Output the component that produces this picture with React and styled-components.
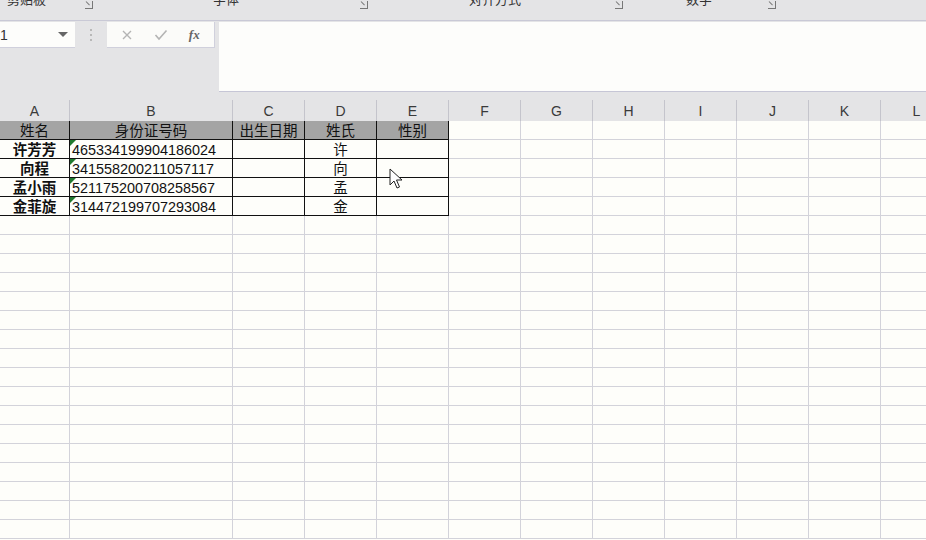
import React from 'react';
import styled, { createGlobalStyle } from 'styled-components';

const GlobalStyle = createGlobalStyle`
  html, body { margin: 0; padding: 0; }
  body {
    width: 926px;
    height: 540px;
    overflow: hidden;
    background: #fefefa;
    font-family: "Liberation Sans", "Noto Sans CJK SC", sans-serif;
  }
`;

const Window = styled.div`
  width: 926px;
  height: 540px;
  overflow: hidden;
  display: flex;
  flex-direction: column;
  position: relative;
`;

const Ribbon = styled.div`
  height: 21px;
  background: #e4e4e6;
  border-bottom: 1px solid #c9c9d6;
  box-sizing: border-box;
  display: flex;
  align-items: flex-start;
  overflow: hidden;
`;

const Group = styled.div`
  width: ${p => p.$w}px;
  height: 10px;
  display: flex;
  justify-content: space-between;
  align-items: flex-end;
  overflow: hidden;
  position: relative;
`;

const GroupLabel = styled.span`
  font-family: "Noto Sans CJK SC", sans-serif;
  font-size: 13px;
  line-height: 13px;
  color: #333;
  margin-left: ${p => p.$ml}px;
  transform: translateY(-5px);
  white-space: nowrap;
`;

const Launcher = styled.span`
  width: 7px;
  height: 7px;
  border-right: 1px solid #777;
  border-bottom: 1px solid #777;
  margin-right: ${p => p.$mr}px;
  margin-bottom: 1px;
  position: relative;
  &::after {
    content: '';
    position: absolute;
    left: 1px;
    top: 0;
    width: 5px;
    height: 1px;
    background: #777;
    transform: rotate(45deg);
    transform-origin: left;
  }
`;

const FormulaBar = styled.div`
  height: 72px;
  background: #e4e4e6;
  display: flex;
  padding-top: 1px;
  box-sizing: border-box;
`;

const Controls = styled.div`
  display: flex;
  align-items: flex-start;
  width: 219px;
  height: 26px;
`;

const NameBox = styled.div`
  width: 75px;
  height: 26px;
  background: #fdfdfb;
  border-bottom: 1px solid #d0d0dc;
  box-sizing: border-box;
  display: flex;
  align-items: center;
  justify-content: space-between;
  padding-right: 7px;
  font-size: 14px;
  color: #333;
`;

const Caret = styled.span`
  width: 0;
  height: 0;
  border-left: 5px solid transparent;
  border-right: 5px solid transparent;
  border-top: 5px solid #666;
`;

const Grip = styled.div`
  width: 32px;
  height: 26px;
  display: flex;
  flex-direction: column;
  align-items: center;
  justify-content: center;
  gap: 3px;
  span {
    width: 2px;
    height: 2px;
    background: #b8b8b8;
  }
`;

const ButtonBox = styled.div`
  width: 108px;
  height: 26px;
  background: #fbfbf9;
  border-bottom: 1px solid #d0d0dc;
  border-right: 1px solid #d0d0dc;
  box-sizing: border-box;
  display: flex;
  align-items: center;
  justify-content: space-around;
  padding: 0 4px;
`;

const Fx = styled.span`
  font-family: "Liberation Serif", serif;
  font-style: italic;
  font-weight: bold;
  font-size: 13px;
  color: #666;
`;

const FormulaInput = styled.div`
  flex: 1;
  height: 70px;
  background: #fdfdfb;
  border-bottom: 1px solid #c6c6d6;
  box-sizing: border-box;
`;

const Sheet = styled.div`
  display: grid;
  grid-template-columns: 70px 163px repeat(10, 72px);
  grid-template-rows: 21px;
  grid-auto-rows: 19px;
  background: #e4e4e6;
  padding-top: 7px;
`;

const ColHead = styled.div`
  box-sizing: border-box;
  border-right: 1px solid #c4c4cc;
  display: flex;
  align-items: flex-end;
  justify-content: center;
  font-size: 14px;
  line-height: 19px;
  color: #3a3a3a;
  background: #e4e4e6;
`;

const Cell = styled.div`
  box-sizing: border-box;
  position: relative;
  background: ${p => (p.$head ? '#a4a4a4' : '#fefefa')};
  border-right: 1px solid ${p => (p.$framed ? '#111' : '#d3d3da')};
  border-bottom: 1px solid ${p => (p.$framed ? '#111' : '#d3d3da')};
  font-family: "Noto Sans CJK SC", "Liberation Sans", sans-serif;
  font-size: 14.5px;
  line-height: 18px;
  font-weight: ${p => (p.$bold ? 700 : 400)};
  color: #111;
  text-align: ${p => p.$align || 'center'};
  padding-left: ${p => (p.$align === 'left' ? '2px' : '0')};
  white-space: nowrap;
  overflow: hidden;
  ${p => p.$flag && `
    &::before {
      content: '';
      position: absolute;
      left: 0;
      top: 0;
      border-top: 6px solid #1f7a2f;
      border-right: 6px solid transparent;
    }
  `}
`;

const Digits = styled.span`
  font-family: "Liberation Sans", sans-serif;
  font-size: 14.4px;
`;

const Cursor = styled.svg`
  position: absolute;
  left: 389px;
  top: 168px;
`;

const columns = ['A', 'B', 'C', 'D', 'E', 'F', 'G', 'H', 'I', 'J', 'K', 'L'];

const people = [
  ['许芳芳', '465334199904186024', '许'],
  ['向程', '341558200211057117', '向'],
  ['孟小雨', '521175200708258567', '孟'],
  ['金菲旋', '314472199707293084', '金'],
];

const titles = ['姓名', '身份证号码', '出生日期', '姓氏', '性别'];

const emptyRows = 17;

export default function App() {
  return (
    <Window>
      <GlobalStyle />
      <Ribbon>
        <Group $w={95}>
          <GroupLabel $ml={7}>剪贴板</GroupLabel>
          <Launcher $mr={2} />
        </Group>
        <Group $w={276}>
          <GroupLabel $ml={118}>字体</GroupLabel>
          <Launcher $mr={3} />
        </Group>
        <Group $w={255}>
          <GroupLabel $ml={98}>对齐方式</GroupLabel>
          <Launcher $mr={3} />
        </Group>
        <Group $w={155}>
          <GroupLabel $ml={60}>数字</GroupLabel>
          <Launcher $mr={5} />
        </Group>
      </Ribbon>
      <FormulaBar>
        <Controls>
          <NameBox>1<Caret /></NameBox>
          <Grip><span /><span /><span /></Grip>
          <ButtonBox>
            <svg width="12" height="12" viewBox="0 0 12 12">
              <path d="M2 2 L10 10 M10 2 L2 10" stroke="#b4b4b4" strokeWidth="1.4" />
            </svg>
            <svg width="14" height="12" viewBox="0 0 14 12">
              <path d="M1.5 6 L5 10 L12.5 1.5" stroke="#b4b4b4" strokeWidth="1.6" fill="none" />
            </svg>
            <Fx>fx</Fx>
          </ButtonBox>
        </Controls>
        <FormulaInput />
      </FormulaBar>
      <Sheet>
        {columns.map(c => (
          <ColHead key={c}>{c}</ColHead>
        ))}
        {titles.map(t => (
          <Cell key={t} $head $framed>{t}</Cell>
        ))}
        {columns.slice(5).map(c => <Cell key={'h' + c} />)}
        {people.map(([name, id, surname]) => (
          <React.Fragment key={id}>
            <Cell $framed $bold>{name}</Cell>
            <Cell $framed $flag $align="left"><Digits>{id}</Digits></Cell>
            <Cell $framed />
            <Cell $framed>{surname}</Cell>
            <Cell $framed />
            {columns.slice(5).map(c => <Cell key={id + c} />)}
          </React.Fragment>
        ))}
        {Array.from({ length: emptyRows }).map((_, r) =>
          columns.map(c => <Cell key={`e${r}${c}`} />)
        )}
      </Sheet>
      <Cursor width="14" height="22" viewBox="0 0 14 22">
        <path d="M1 1 L1 17 L5 13 L8 20 L10.5 19 L7.5 12 L13 12 Z" fill="#fff" stroke="#222" strokeWidth="1" strokeLinejoin="round" />
      </Cursor>
    </Window>
  );
}
